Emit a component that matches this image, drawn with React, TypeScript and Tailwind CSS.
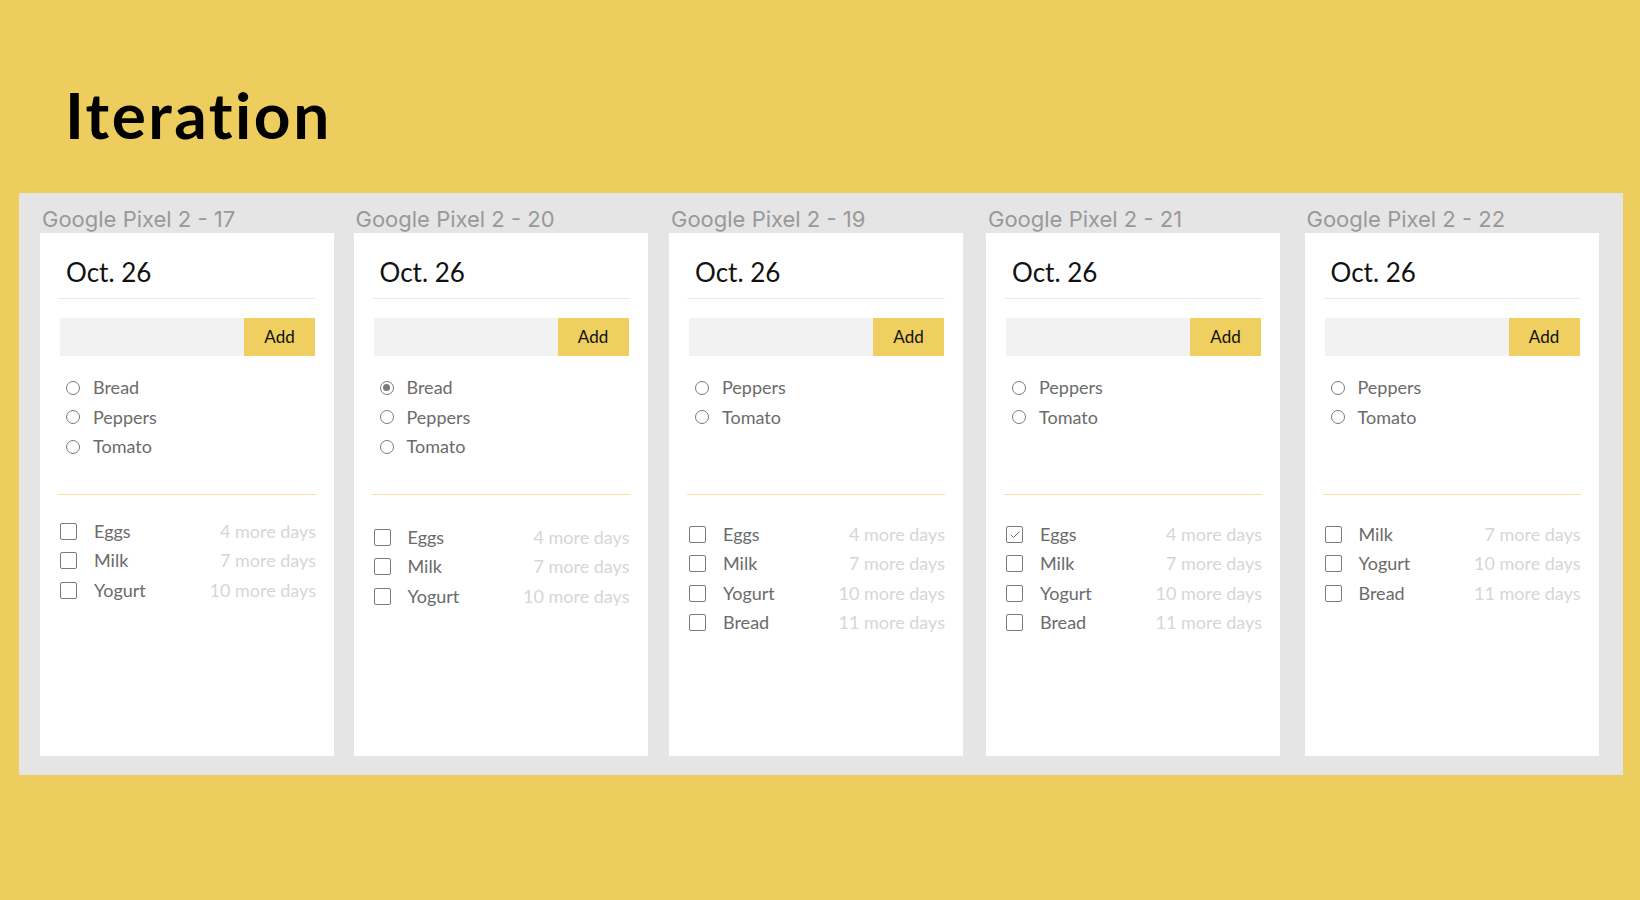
import { Check } from 'lucide-react';

type Food = { name: string; days: string; done?: boolean };

type Screen = {
  label: string;
  ml: string;
  picked?: string;
  radios: string[];
  listTop: string;
  foods: Food[];
};

const screens: Screen[] = [
  {
    label: 'Google Pixel 2 - 17',
    ml: 'ml-0',
    radios: ['Bread', 'Peppers', 'Tomato'],
    listTop: 'mt-[22px]',
    foods: [
      { name: 'Eggs', days: '4 more days' },
      { name: 'Milk', days: '7 more days' },
      { name: 'Yogurt', days: '10 more days' },
    ],
  },
  {
    label: 'Google Pixel 2 - 20',
    ml: 'ml-[19.5px]',
    picked: 'Bread',
    radios: ['Bread', 'Peppers', 'Tomato'],
    listTop: 'mt-[28px]',
    foods: [
      { name: 'Eggs', days: '4 more days' },
      { name: 'Milk', days: '7 more days' },
      { name: 'Yogurt', days: '10 more days' },
    ],
  },
  {
    label: 'Google Pixel 2 - 19',
    ml: 'ml-[21.5px]',
    radios: ['Peppers', 'Tomato'],
    listTop: 'mt-[25px]',
    foods: [
      { name: 'Eggs', days: '4 more days' },
      { name: 'Milk', days: '7 more days' },
      { name: 'Yogurt', days: '10 more days' },
      { name: 'Bread', days: '11 more days' },
    ],
  },
  {
    label: 'Google Pixel 2 - 21',
    ml: 'ml-[23px]',
    radios: ['Peppers', 'Tomato'],
    listTop: 'mt-[25px]',
    foods: [
      { name: 'Eggs', days: '4 more days', done: true },
      { name: 'Milk', days: '7 more days' },
      { name: 'Yogurt', days: '10 more days' },
      { name: 'Bread', days: '11 more days' },
    ],
  },
  {
    label: 'Google Pixel 2 - 22',
    ml: 'ml-[24.5px]',
    radios: ['Peppers', 'Tomato'],
    listTop: 'mt-[25px]',
    foods: [
      { name: 'Milk', days: '7 more days' },
      { name: 'Yogurt', days: '10 more days' },
      { name: 'Bread', days: '11 more days' },
    ],
  },
];

function Radio({ on }: { on: boolean }) {
  return (
    <span className="flex h-[14px] w-[14px] items-center justify-center rounded-full border-[1.5px] border-[#7a7a7a]">
      {on && <span className="h-[7px] w-[7px] rounded-full bg-[#7a7a7a]" />}
    </span>
  );
}

function Box({ on }: { on?: boolean }) {
  return (
    <span className="flex h-[17px] w-[17px] items-center justify-center rounded-[2px] border-[1.5px] border-[#7a7a7a]">
      {on && <Check size={12} strokeWidth={2} className="text-[#6f6f6f]" />}
    </span>
  );
}

function Phone({ s }: { s: Screen }) {
  return (
    <div className={`flex w-[294px] shrink-0 flex-col ${s.ml}`}>
      <div className="ml-[2px] h-[21px] whitespace-nowrap font-['Inter',sans-serif] text-[22px] leading-none text-[#999999]">
        {s.label}
      </div>
      <div className="mt-[4px] h-[523px] bg-white px-[18px] font-['Lato',sans-serif]">
        <div className="h-[66px] border-b border-[#ebebeb] pl-[8px] pt-[26px] text-[26px] leading-none text-[#111111]">
          Oct. 26
        </div>
        <div className="ml-[2px] mr-px mt-[19px] flex h-[38px]">
          <div className="flex-1 bg-[#f2f2f2]" />
          <button className="w-[71px] bg-[#efcf5f] text-[17px] text-[#111111]">Add</button>
        </div>
        <div className="h-[138px] pt-[17px]">
          {s.radios.map((r) => (
            <div key={r} className="flex h-[29.5px] items-center pl-[8px]">
              <Radio on={s.picked === r} />
              <span className="ml-[13px] text-[18px] text-[#6b6b6b]">{r}</span>
            </div>
          ))}
        </div>
        <div className="h-px bg-[#f5e4a3]" />
        <div className={s.listTop}>
          {s.foods.map((f) => (
            <div key={f.name} className="flex h-[29.3px] items-center pl-[2px]">
              <Box on={f.done} />
              <span className="ml-[17px] text-[18px] text-[#6b6b6b]">{f.name}</span>
              <span className="ml-auto text-[18px] text-[#d6d6d6]">{f.days}</span>
            </div>
          ))}
        </div>
      </div>
    </div>
  );
}

export default function App() {
  return (
    <div className="h-[900px] w-[1640px] overflow-hidden bg-[#eecd5f] pt-[83px]">
      <h1 className="ml-[65px] font-['Lato',sans-serif] text-[64px] font-bold leading-none tracking-[2.5px] text-black">
        Iteration
      </h1>
      <div className="ml-[19px] mt-[46px] flex w-[1604px] bg-[#e5e5e5] pb-[19px] pl-[21px] pt-[15px]">
        {screens.map((s) => (
          <Phone key={s.label} s={s} />
        ))}
      </div>
    </div>
  );
}
